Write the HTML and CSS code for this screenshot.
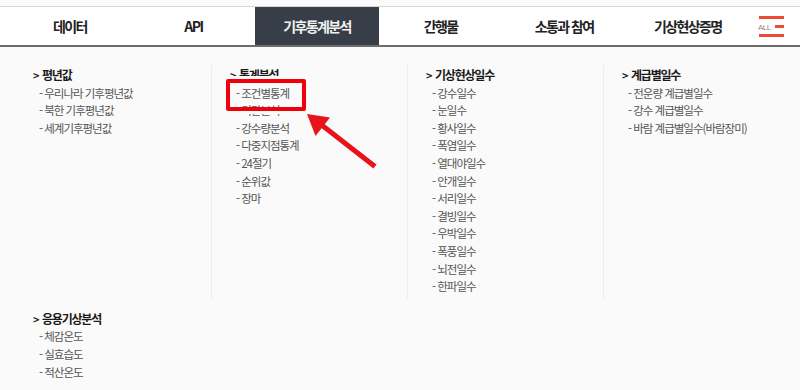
FILE: index.html
```html
<!DOCTYPE html>
<html lang="ko">
<head>
  <meta charset="UTF-8" />
  <meta name="viewport" content="width=device-width, initial-scale=1.0"/>
  <title>기후통계분석</title>
  <link rel="stylesheet" href="styles.css">
</head>
<body>

<div class="gnb">
  <a class="tab">데이터</a>
  <a class="tab">API</a>
  <a class="tab on">기후통계분석</a>
  <a class="tab">간행물</a>
  <a class="tab">소통과 참여</a>
  <a class="tab">기상현상증명</a>
  <a class="all">
    <svg width="27" height="22" viewBox="0 0 27 22">
      <line x1="1" y1="1.5" x2="26" y2="1.5" stroke="#ee4b36" stroke-width="3"/>
      <line x1="17" y1="10.5" x2="26" y2="10.5" stroke="#ee4b36" stroke-width="3"/>
      <line x1="1" y1="19.5" x2="26" y2="19.5" stroke="#ee4b36" stroke-width="3"/>
      <text x="0" y="13.5" font-size="8" fill="#8a8a8a" font-family="Liberation Sans, sans-serif" letter-spacing="-0.5">ALL</text>
    </svg>
  </a>
</div>

<div class="menu">
  <div class="row">
    <div class="col">
      <h3>평년값</h3>
      <ul>
        <li>- 우리나라 기후평년값</li>
        <li>- 북한 기후평년값</li>
        <li>- 세계기후평년값</li>
      </ul>
    </div>
    <div class="col">
      <h3>통계분석</h3>
      <ul>
        <li class="mark">- 조건별통계</li>
        <li>- 기간분석</li>
        <li>- 강수량분석</li>
        <li>- 다중지점통계</li>
        <li>- 24절기</li>
        <li>- 순위값</li>
        <li>- 장마</li>
      </ul>
    </div>
    <div class="col">
      <h3>기상현상일수</h3>
      <ul>
        <li>- 강수일수</li>
        <li>- 눈일수</li>
        <li>- 황사일수</li>
        <li>- 폭염일수</li>
        <li>- 열대야일수</li>
        <li>- 안개일수</li>
        <li>- 서리일수</li>
        <li>- 결빙일수</li>
        <li>- 우박일수</li>
        <li>- 폭풍일수</li>
        <li>- 뇌전일수</li>
        <li>- 한파일수</li>
      </ul>
    </div>
    <div class="col">
      <h3>계급별일수</h3>
      <ul>
        <li>- 전운량 계급별일수</li>
        <li>- 강수 계급별일수</li>
        <li>- 바람 계급별일수(바람장미)</li>
      </ul>
    </div>
  </div>

  <div class="row row2">
    <div class="col">
      <h3>응용기상분석</h3>
      <ul>
        <li>- 체감온도</li>
        <li>- 실효습도</li>
        <li>- 적산온도</li>
      </ul>
    </div>
  </div>

  <!-- 화살표 표시 -->
  <svg class="arrow" width="80" height="65" viewBox="0 0 80 65">
    <line x1="73" y1="60" x2="23" y2="21" stroke="#e8141b" stroke-width="5" stroke-linecap="square"/>
    <polygon points="7,9 30,12.5 15.5,31" fill="#e8141b"/>
  </svg>
</div>

</body>
</html>
```

FILE: styles.css
```css
body {
  margin: 0;
  background: #fafafa;
  font-family: "Noto Sans CJK KR", "Noto Sans", sans-serif;
  color: #222;
  position: relative;
}
.gnb {
  margin-top: 6px;
  height: 38px;
  padding-left: 8px;
  background: #fff;
  border-top: 1px solid #d6d6d6;
  border-bottom: 2px solid #6d6d6d;
  display: flex;
  align-items: stretch;
}
.tab {
  width: 123.6px;
  display: flex;
  align-items: center;
  justify-content: center;
  font-size: 14px;
  font-weight: bold;
  letter-spacing: -1.6px;
  color: #222;
}
.tab.on {
  background: #373e47;
  color: #f2f2f2;
}
.all {
  margin-left: 8px;
  display: flex;
  align-items: center;
}
.all svg {
  display: block;
  margin-top: 1px;
}
.menu {
  padding: 18px 0 0 15px;
}
.row {
  display: grid;
  grid-template-columns: repeat(4, 196px);
}
.col {
  padding: 1px 0 2px 18px;
}
.row .col + .col {
  border-left: 1px solid #ececec;
}
.row2 {
  margin-top: 11px;
}
h3 {
  margin: 0;
  font-size: 12px;
  line-height: 17.6px;
  font-weight: bold;
  letter-spacing: -1.2px;
  color: #1a1a1a;
}
h3::before {
  content: ">";
  display: inline-block;
  width: 9px;
  font-size: 11px;
  letter-spacing: 0;
}
ul {
  list-style: none;
  margin: 0;
  padding: 0 0 0 6px;
}
li {
  font-size: 11.5px;
  line-height: 17.6px;
  letter-spacing: -1px;
  color: #555;
}
.mark {
  position: relative;
}
.mark::after {
  content: "";
  position: absolute;
  left: -10px;
  top: -6px;
  width: 80px;
  height: 32px;
  box-sizing: border-box;
  border: 4px solid #f0000a;
  border-radius: 2px;
  box-shadow: 0 0 0 3px #fafafa;
}
.arrow {
  position: absolute;
  left: 300px;
  top: 105px;
}
```
